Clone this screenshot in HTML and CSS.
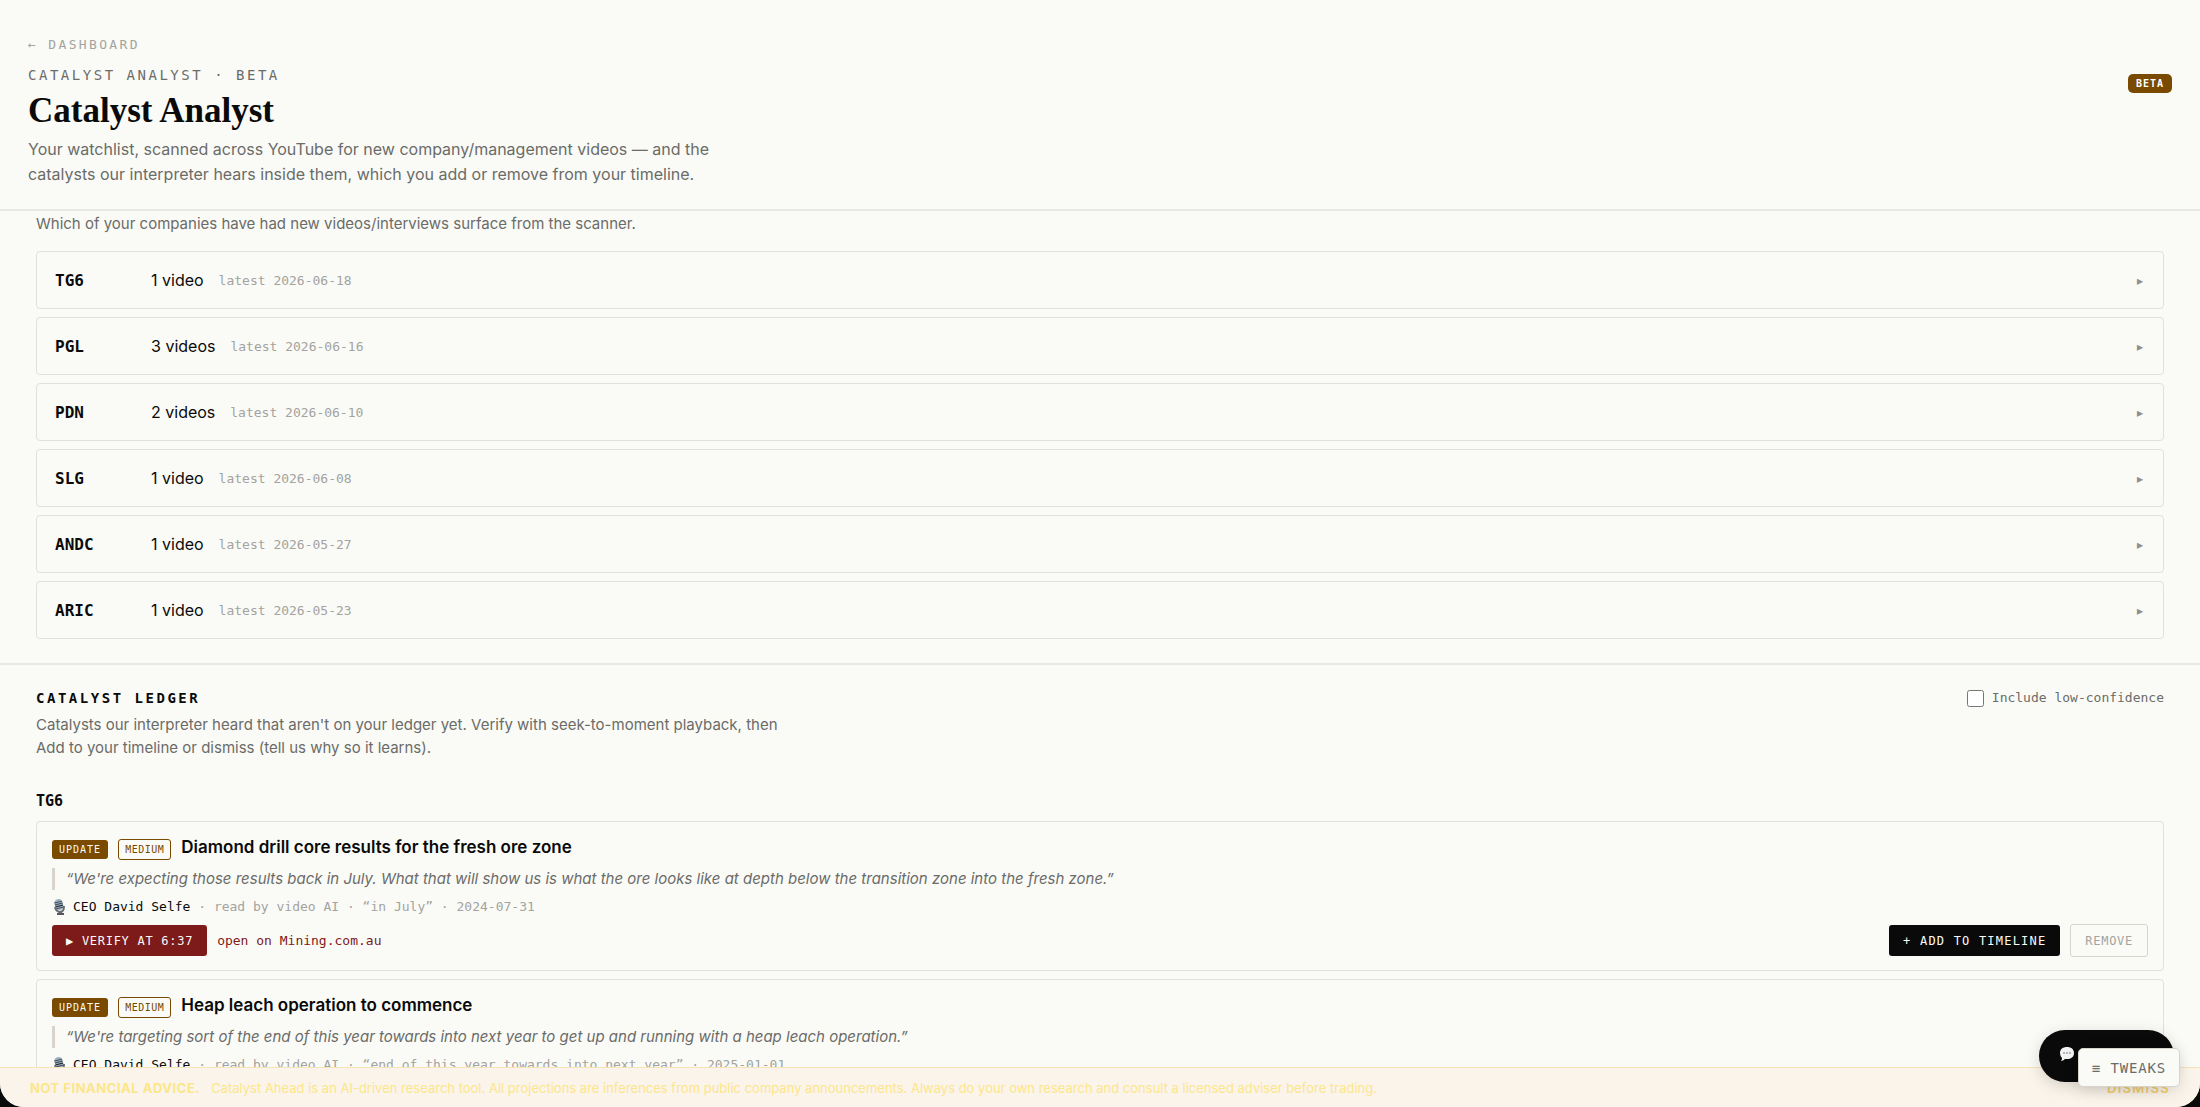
FILE: index.html
```html
<!DOCTYPE html>
<html lang="en">
<head>
  <meta charset="UTF-8">
  <title>Catalyst Analyst</title>
  <meta name="viewport" content="width=device-width, initial-scale=1">
  <link rel="stylesheet" href="styles.css">
</head>
<body>
  <div class="app">
    <header class="page-header">
      <div class="header-text">
        <a class="back" href="#">← Dashboard</a>
        <div class="eyebrow">Catalyst Analyst · Beta</div>
        <h1>Catalyst Analyst</h1>
        <p>Your watchlist, scanned across YouTube for new company/management videos — and the catalysts our interpreter hears inside them, which you add or remove from your timeline.</p>
      </div>
      <span class="beta">BETA</span>
    </header>

    <main>
      <section class="videos">
        <p class="hint">Which of your companies have had new videos/interviews surface from the scanner.</p>
        <div class="rows">
          <button class="row"><span class="ticker">TG6</span><span class="count">1 video</span><span class="latest">latest 2026-06-18</span><span class="arrow">▸</span></button>
          <button class="row"><span class="ticker">PGL</span><span class="count">3 videos</span><span class="latest">latest 2026-06-16</span><span class="arrow">▸</span></button>
          <button class="row"><span class="ticker">PDN</span><span class="count">2 videos</span><span class="latest">latest 2026-06-10</span><span class="arrow">▸</span></button>
          <button class="row"><span class="ticker">SLG</span><span class="count">1 video</span><span class="latest">latest 2026-06-08</span><span class="arrow">▸</span></button>
          <button class="row"><span class="ticker">ANDC</span><span class="count">1 video</span><span class="latest">latest 2026-05-27</span><span class="arrow">▸</span></button>
          <button class="row"><span class="ticker">ARIC</span><span class="count">1 video</span><span class="latest">latest 2026-05-23</span><span class="arrow">▸</span></button>
        </div>
      </section>

      <section class="ledger">
        <div class="ledger-head">
          <div>
            <h2>Catalyst Ledger</h2>
            <p class="hint">Catalysts our interpreter heard that aren't on your ledger yet. Verify with seek-to-moment playback, then Add to your timeline or dismiss (tell us why so it learns).</p>
          </div>
          <label class="low"><input type="checkbox"> Include low-confidence</label>
        </div>

        <h3>TG6</h3>
        <article class="card">
          <div class="card-title">
            <span class="tag">UPDATE</span>
            <span class="tag outline">MEDIUM</span>
            <h4>Diamond drill core results for the fresh ore zone</h4>
          </div>
          <blockquote>“We're expecting those results back in July. What that will show us is what the ore looks like at depth below the transition zone into the fresh zone.”</blockquote>
          <div class="meta">
            <svg class="mic" viewBox="0 0 14 16" aria-hidden="true">
              <path d="M5 15h7" stroke="#55595d" stroke-width="2"/>
              <path d="M8 12l1 3" stroke="#55595d" stroke-width="3"/>
              <path d="M3 8q1 5 6 5 3-1 3-6" fill="none" stroke="#6a6f74" stroke-width="2"/>
              <g transform="rotate(-14 7 6)">
                <rect x="3" y="0" width="8" height="11" rx="4" fill="#9db0c0"/>
                <path d="M3 3h8M3 5h8M3 9h8" stroke="#3d4852" stroke-width="1"/>
                <path d="M3 7h8" stroke="#1c2228" stroke-width="1"/>
              </g>
            </svg>
            <span><b>CEO David Selfe</b> · read by video AI · “in July” · 2024-07-31</span>
          </div>
          <div class="actions">
            <button class="btn verify">▶ VERIFY AT 6:37</button>
            <a class="source" href="#">open on Mining.com.au</a>
            <button class="btn add">+ ADD TO TIMELINE</button>
            <button class="btn remove">REMOVE</button>
          </div>
        </article>

        <article class="card">
          <div class="card-title">
            <span class="tag">UPDATE</span>
            <span class="tag outline">MEDIUM</span>
            <h4>Heap leach operation to commence</h4>
          </div>
          <blockquote>“We're targeting sort of the end of this year towards into next year to get up and running with a heap leach operation.”</blockquote>
          <div class="meta">
            <svg class="mic" viewBox="0 0 14 16" aria-hidden="true">
              <path d="M5 15h7" stroke="#55595d" stroke-width="2"/>
              <path d="M8 12l1 3" stroke="#55595d" stroke-width="3"/>
              <path d="M3 8q1 5 6 5 3-1 3-6" fill="none" stroke="#6a6f74" stroke-width="2"/>
              <g transform="rotate(-14 7 6)">
                <rect x="3" y="0" width="8" height="11" rx="4" fill="#9db0c0"/>
                <path d="M3 3h8M3 5h8M3 9h8" stroke="#3d4852" stroke-width="1"/>
                <path d="M3 7h8" stroke="#1c2228" stroke-width="1"/>
              </g>
            </svg>
            <span><b>CEO David Selfe</b> · read by video AI · “end of this year towards into next year” · 2025-01-01</span>
          </div>
        </article>
      </section>
    </main>

    <footer class="disclaimer">
      <strong>NOT FINANCIAL ADVICE.</strong>
      <span>Catalyst Ahead is an AI-driven research tool. All projections are inferences from public company announcements. Always do your own research and consult a licensed adviser before trading.</span>
      <button class="dismiss">DISMISS</button>
    </footer>

    <button class="chat" aria-label="Chat">
      <svg viewBox="0 0 16 16" aria-hidden="true">
        <path d="M8 1c4 0 7 2 7 6s-3 6-7 6H6Q4 15 2 15q1-1 1-3Q1 10 1 7c0-4 3-6 7-6z" fill="#f4f4f4"/>
        <path d="M4 7h2M7 7h2M10 7h2" stroke="#777" stroke-width="1"/>
      </svg>
    </button>
    <button class="tweaks">≡ TWEAKS</button>
  </div>
</body>
</html>
```

FILE: styles.css
```css
* { box-sizing: border-box; }
body { margin: 0; background: #0a0a0a; color: #0a0a0a; font-family: Inter, sans-serif; }
h1, h2, h3, h4, p, blockquote { margin: 0; }
button { font: inherit; cursor: pointer; }

.app {
  position: relative;
  display: flex;
  flex-direction: column;
  height: 100vh;
  overflow: hidden;
  background: #fafbf7;
  border-radius: 0 0 24px 24px;
}

/* Header */
.page-header {
  display: flex;
  justify-content: space-between;
  align-items: flex-start;
  padding: 36px 28px 22px;
  border-bottom: 2px solid #e8e8e4;
}
.header-text { max-width: 720px; }
.back, .eyebrow, h2, h3, .beta, .ticker, .latest, .arrow, .low, .tag, .meta, .btn, .source, .tweaks {
  font-family: "DejaVu Sans Mono", monospace;
}
.back {
  display: block;
  font-size: 13px;
  line-height: 18px;
  letter-spacing: 0.18em;
  text-transform: uppercase;
  text-decoration: none;
  color: #a3a39f;
}
.eyebrow {
  margin-top: 12px;
  font-size: 14px;
  line-height: 18px;
  letter-spacing: 0.18em;
  text-transform: uppercase;
  color: #6b6b68;
}
h1 {
  margin: 7px 0 6px;
  font-family: "Liberation Serif", serif;
  font-size: 35px;
  line-height: 40px;
  font-weight: 700;
}
.header-text p { font-size: 16px; line-height: 25px; color: #6b6b68; }
.beta {
  margin-top: 38px;
  padding: 0 8px;
  border-radius: 5px;
  background: #7a4a00;
  color: #fff;
  font-size: 10px;
  line-height: 19px;
  font-weight: 700;
  letter-spacing: 0.1em;
}

/* Videos per company */
main { flex: 1; min-height: 0; overflow: hidden; }
.videos { padding: 1px 36px 24px; border-bottom: 2px solid #e8e8e4; }
.hint { max-width: 760px; font-size: 15px; line-height: 23px; color: #6b6b68; }
.videos .hint { margin-bottom: 16px; }
.rows { display: flex; flex-direction: column; gap: 8px; }
.row {
  display: flex;
  align-items: center;
  height: 58px;
  padding: 0 18px;
  border: 1px solid #e0e0dc;
  border-radius: 4px;
  background: none;
  color: #0a0a0a;
  text-align: left;
}
.ticker { width: 96px; font-size: 16px; font-weight: 700; }
.count { margin-right: 15px; font-size: 16px; }
.latest { font-size: 13px; color: #a3a39f; }
.arrow { margin-left: auto; font-size: 16px; color: #8f8f8b; }

/* Ledger */
.ledger { padding: 22px 36px; }
.ledger-head { display: flex; justify-content: space-between; align-items: flex-start; }
h2 { margin-bottom: 4px; font-size: 14px; line-height: 22px; letter-spacing: 0.18em; text-transform: uppercase; }
.low { display: flex; align-items: center; gap: 8px; font-size: 13px; line-height: 22px; color: #6b6b68; }
.low input { width: 17px; height: 17px; margin: 0; }
h3 { margin: 31px 0 9px; font-size: 15px; line-height: 22px; }

.card {
  margin-bottom: 8px;
  padding: 13px 15px;
  border: 1px solid #e0e0dc;
  border-radius: 4px;
}
.card-title { display: flex; align-items: baseline; gap: 10px; }
.card-title h4 { font-size: 17px; line-height: 24px; font-weight: 600; }
.tag {
  padding: 0 7px;
  border-radius: 3px;
  background: #7a4a00;
  color: #fafbf7;
  font-size: 10px;
  line-height: 19px;
  letter-spacing: 0.1em;
}
.tag.outline { padding: 0 6px; border: 1px solid #7a4a00; background: none; color: #7a4a00; letter-spacing: 0.05em; }
blockquote {
  margin-top: 8px;
  padding-left: 11px;
  border-left: 3px solid #d8d4cc;
  font-size: 15px;
  line-height: 22px;
  font-style: italic;
  color: #6b6b68;
}
.meta { display: flex; align-items: center; gap: 7px; margin-top: 8px; font-size: 13px; line-height: 18px; color: #a3a39f; }
.meta b { font-weight: 400; color: #0a0a0a; }
.mic { width: 14px; height: 16px; }
.actions { display: flex; align-items: center; gap: 10px; margin-top: 8px; }
.btn {
  height: 31px;
  padding: 0 14px;
  border: 0;
  border-radius: 3px;
  font-size: 12px;
  letter-spacing: 0.06em;
}
.verify { background: #7d1a1a; color: #fafbf7; }
.source { font-size: 13px; color: #7d1a1a; text-decoration: none; }
.add { margin-left: auto; background: #0a0a0a; color: #fafbf7; letter-spacing: 0.1em; }
.remove { height: 33px; border: 1px solid #d8d4cc; background: none; color: #a3a39f; }

/* Bottom bar */
.disclaimer {
  display: flex;
  align-items: center;
  gap: 11px;
  height: 40px;
  padding: 0 30px;
  border-top: 1px solid #f8e2b8;
  background: #faf4ea;
  color: #fde68a;
  font-size: 13px;
}
.disclaimer strong { letter-spacing: 0.04em; }
.dismiss { margin-left: auto; padding: 0; border: 0; background: none; color: #f5d06a; font-size: 13px; font-weight: 600; letter-spacing: 0.1em; }

.chat {
  position: absolute;
  right: 26px;
  bottom: 25px;
  width: 135px;
  height: 52px;
  padding: 0 20px;
  border: 0;
  border-radius: 26px;
  background: #0a0a0a;
  box-shadow: 0 4px 16px rgba(0, 0, 0, 0.15);
  text-align: left;
}
.chat svg { width: 16px; height: 16px; }
.tweaks {
  position: absolute;
  right: 20px;
  bottom: 20px;
  height: 39px;
  padding: 0 13px;
  border: 1px solid #d8d4cc;
  border-radius: 5px;
  background: #fafbf7;
  color: #6b6b68;
  box-shadow: 0 4px 16px rgba(0, 0, 0, 0.12);
  font-size: 14px;
  letter-spacing: 0.06em;
}
```
